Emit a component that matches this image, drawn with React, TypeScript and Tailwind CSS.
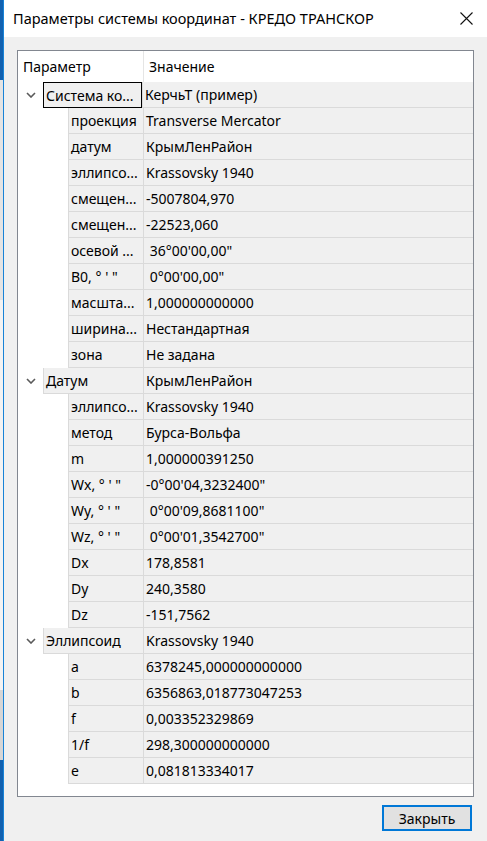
import React from 'react'

type Row = { label: string; value: string; level: 0 | 1; focused?: boolean }

const rows: Row[] = [
  { label: 'Система ко...', value: 'КерчьТ (пример)', level: 0, focused: true },
  { label: 'проекция', value: 'Transverse Mercator', level: 1 },
  { label: 'датум', value: 'КрымЛенРайон', level: 1 },
  { label: 'эллипсо...', value: 'Krassovsky 1940', level: 1 },
  { label: 'смещен...', value: '-5007804,970', level: 1 },
  { label: 'смещен...', value: '-22523,060', level: 1 },
  { label: 'осевой ...', value: ' 36°00\'00,00"', level: 1 },
  { label: 'B0, ° \' "', value: ' 0°00\'00,00"', level: 1 },
  { label: 'масшта...', value: '1,000000000000', level: 1 },
  { label: 'ширина...', value: 'Нестандартная', level: 1 },
  { label: 'зона', value: 'Не задана', level: 1 },
  { label: 'Датум', value: 'КрымЛенРайон', level: 0 },
  { label: 'эллипсо...', value: 'Krassovsky 1940', level: 1 },
  { label: 'метод', value: 'Бурса-Вольфа', level: 1 },
  { label: 'm', value: '1,000000391250', level: 1 },
  { label: 'Wx, ° \' "', value: '-0°00\'04,3232400"', level: 1 },
  { label: 'Wy, ° \' "', value: ' 0°00\'09,8681100"', level: 1 },
  { label: 'Wz, ° \' "', value: ' 0°00\'01,3542700"', level: 1 },
  { label: 'Dx', value: '178,8581', level: 1 },
  { label: 'Dy', value: '240,3580', level: 1 },
  { label: 'Dz', value: '-151,7562', level: 1 },
  { label: 'Эллипсоид', value: 'Krassovsky 1940', level: 0 },
  { label: 'a', value: '6378245,000000000000', level: 1 },
  { label: 'b', value: '6356863,018773047253', level: 1 },
  { label: 'f', value: '0,003352329869', level: 1 },
  { label: '1/f', value: '298,300000000000', level: 1 },
  { label: 'e', value: '0,081813334017', level: 1 },
]

function Chevron() {
  return (
    <svg width="10" height="6" viewBox="0 0 10 6" className="flex-none">
      <path d="M1 1 L5 5 L9 1" fill="none" stroke="#5a5a5a" strokeWidth="1.6" />
    </svg>
  )
}

function TreeRow({ row }: { row: Row }) {
  return (
    <div className="flex h-[26px]">
      <div className={row.level === 0 ? 'w-[25px] flex-none flex items-center justify-center pl-[1px]' : 'w-[50px] flex-none'}>
        {row.level === 0 && <Chevron />}
      </div>
      <div className="flex flex-1 bg-[#f0f0f0] border-b border-l border-[#dadada]">
        <div
          className={
            (row.level === 0 ? 'w-[99px] ' : 'w-[74px] ') +
            (row.focused ? 'border border-black -ml-px -mb-px ' : '') +
            'flex-none flex items-center pl-[2px] whitespace-pre overflow-hidden'
          }
        >
          {row.label}
        </div>
        <div className="flex-1 flex items-center border-l border-[#dadada] pl-[2px] whitespace-pre">
          {row.value}
        </div>
      </div>
    </div>
  )
}

export default function App() {
  return (
    <div
      className="w-[487px] h-[841px] flex overflow-hidden text-black"
      style={{ fontFamily: '"Noto Sans", "Open Sans", sans-serif' }}
    >
      {/* background window peeking at the left */}
      <div className="w-[3px] flex-none flex flex-col">
        <div className="h-[80px] bg-[#1261b0]" />
        <div className="h-[220px] bg-[#e4e4e4]" />
        <div className="h-[390px] bg-[#f3f3f3]" />
        <div className="h-[70px] bg-[#d6d6d6]" />
        <div className="flex-1 bg-[#1261b0]" />
      </div>

      <div className="flex-1 flex flex-col border-l border-[#1883d7] bg-[#f0f0f0]">
        <div className="h-[37px] flex-none bg-white flex items-center pl-[9px] pr-[14px]">
          <span className="text-[14.5px] flex-1">Параметры системы координат - КРЕДО ТРАНСКОР</span>
          <svg width="13" height="13" viewBox="0 0 13 13">
            <path d="M0.5 0.5 L12.5 12.5 M12.5 0.5 L0.5 12.5" stroke="#111" strokeWidth="1.1" />
          </svg>
        </div>

        <div className="flex-1 flex flex-col pt-[13px] pl-[13px] pr-[13px]">
          <div className="h-[747px] flex-none border border-[#828790] bg-white text-[14px] flex flex-col">
            <div className="h-[31px] flex-none flex">
              <div className="w-[125px] flex-none flex items-center pl-[5px]">Параметр</div>
              <div className="flex-1 flex items-center border-l border-[#e5e5e5] pl-[5px]">Значение</div>
            </div>
            {rows.map((r, i) => (
              <TreeRow key={i} row={r} />
            ))}
          </div>

          <div className="flex justify-end mt-[8px] pr-[2px]">
            <button className="w-[90px] h-[26px] border-2 border-[#0078d7] bg-[#e1e1e1] text-[14px] flex items-center justify-center">
              Закрыть
            </button>
          </div>
        </div>
      </div>
    </div>
  )
}
